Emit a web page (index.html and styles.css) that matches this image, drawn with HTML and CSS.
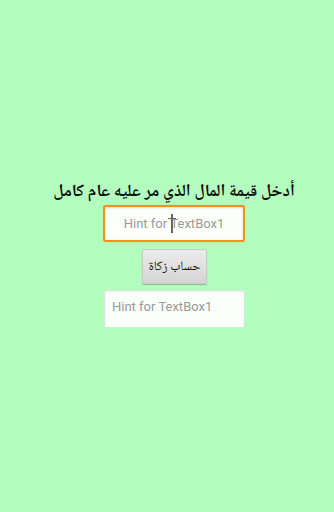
FILE: index.html
```html
<!DOCTYPE html>
<html lang="ar">
<head>
<meta charset="utf-8">
<link rel="stylesheet" href="styles.css">
</head>
<body>
<div class="screen">
  <div class="title" dir="rtl">أدخل قيمة المال الذي مر عليه عام كامل</div>
  <div class="field field-focus">
    <span class="hint">Hint for <span class="caret-wrap"><span class="caret"></span>T</span>extBox1</span>
  </div>
  <div class="btn" dir="rtl">حساب زكاة</div>
  <div class="field field-plain">
    <span class="hint">Hint for TextBox1</span>
  </div>
</div>
</body>
</html>
```
FILE: styles.css
```css
html, body {
  margin: 0;
  padding: 0;
  background: #b3fdbf;
  height: 100%;
}
.screen {
  display: flex;
  flex-direction: column;
  align-items: center;
  padding-left: 14px;
  padding-top: 180px;
  font-family: "Noto Naskh Arabic", "Noto Sans Arabic", "DejaVu Sans Condensed", "DejaVu Sans", sans-serif;
}
.title {
  font-size: 17px;
  font-weight: bold;
  line-height: 26px;
  height: 24px;
  color: #111;
  white-space: nowrap;
}
.field {
  box-sizing: border-box;
  width: 142px;
  height: 37px;
  display: flex;
  align-items: center;
  font-family: "Roboto", "Open Sans", sans-serif;
  font-size: 13px;
  color: #9a9a9a;
}
.field-focus {
  margin-top: 1px;
  border: 2px solid #f5901f;
  border-radius: 3px;
  background: #fdfffd;
  box-shadow: inset 0 1px 3px rgba(0,0,0,0.12), 0 0 1px rgba(245,144,31,0.6);
  justify-content: center;
}
.field-plain {
  margin-top: 6px;
  width: 141px;
  height: 38px;
  border: 1px solid #d4e9d6;
  background: #fafffa;
  box-shadow: inset 0 1px 3px rgba(0,0,0,0.08);
  padding-left: 7px;
  padding-bottom: 6px;
  margin-left: 1px;
}
.hint {
  white-space: nowrap;
}
.caret-wrap {
  position: relative;
}
.caret {
  position: absolute;
  left: 1px;
  top: -2px;
  width: 2px;
  height: 19px;
  background: #666;
}
.caret::before {
  content: "";
  position: absolute;
  left: -3px;
  top: 4px;
  width: 8px;
  height: 1px;
  background: #666;
}
.btn {
  box-sizing: border-box;
  margin-top: 7px;
  width: 65px;
  height: 35px;
  display: flex;
  align-items: center;
  justify-content: center;
  background: linear-gradient(#ececec, #d4d4d4);
  border: 1px solid #c9cbc9;
  border-radius: 2px;
  box-shadow: 0 1px 1px rgba(0,0,0,0.25);
  font-size: 13px;
  white-space: nowrap;
  color: #111;
  margin-left: 1px;
}
```
